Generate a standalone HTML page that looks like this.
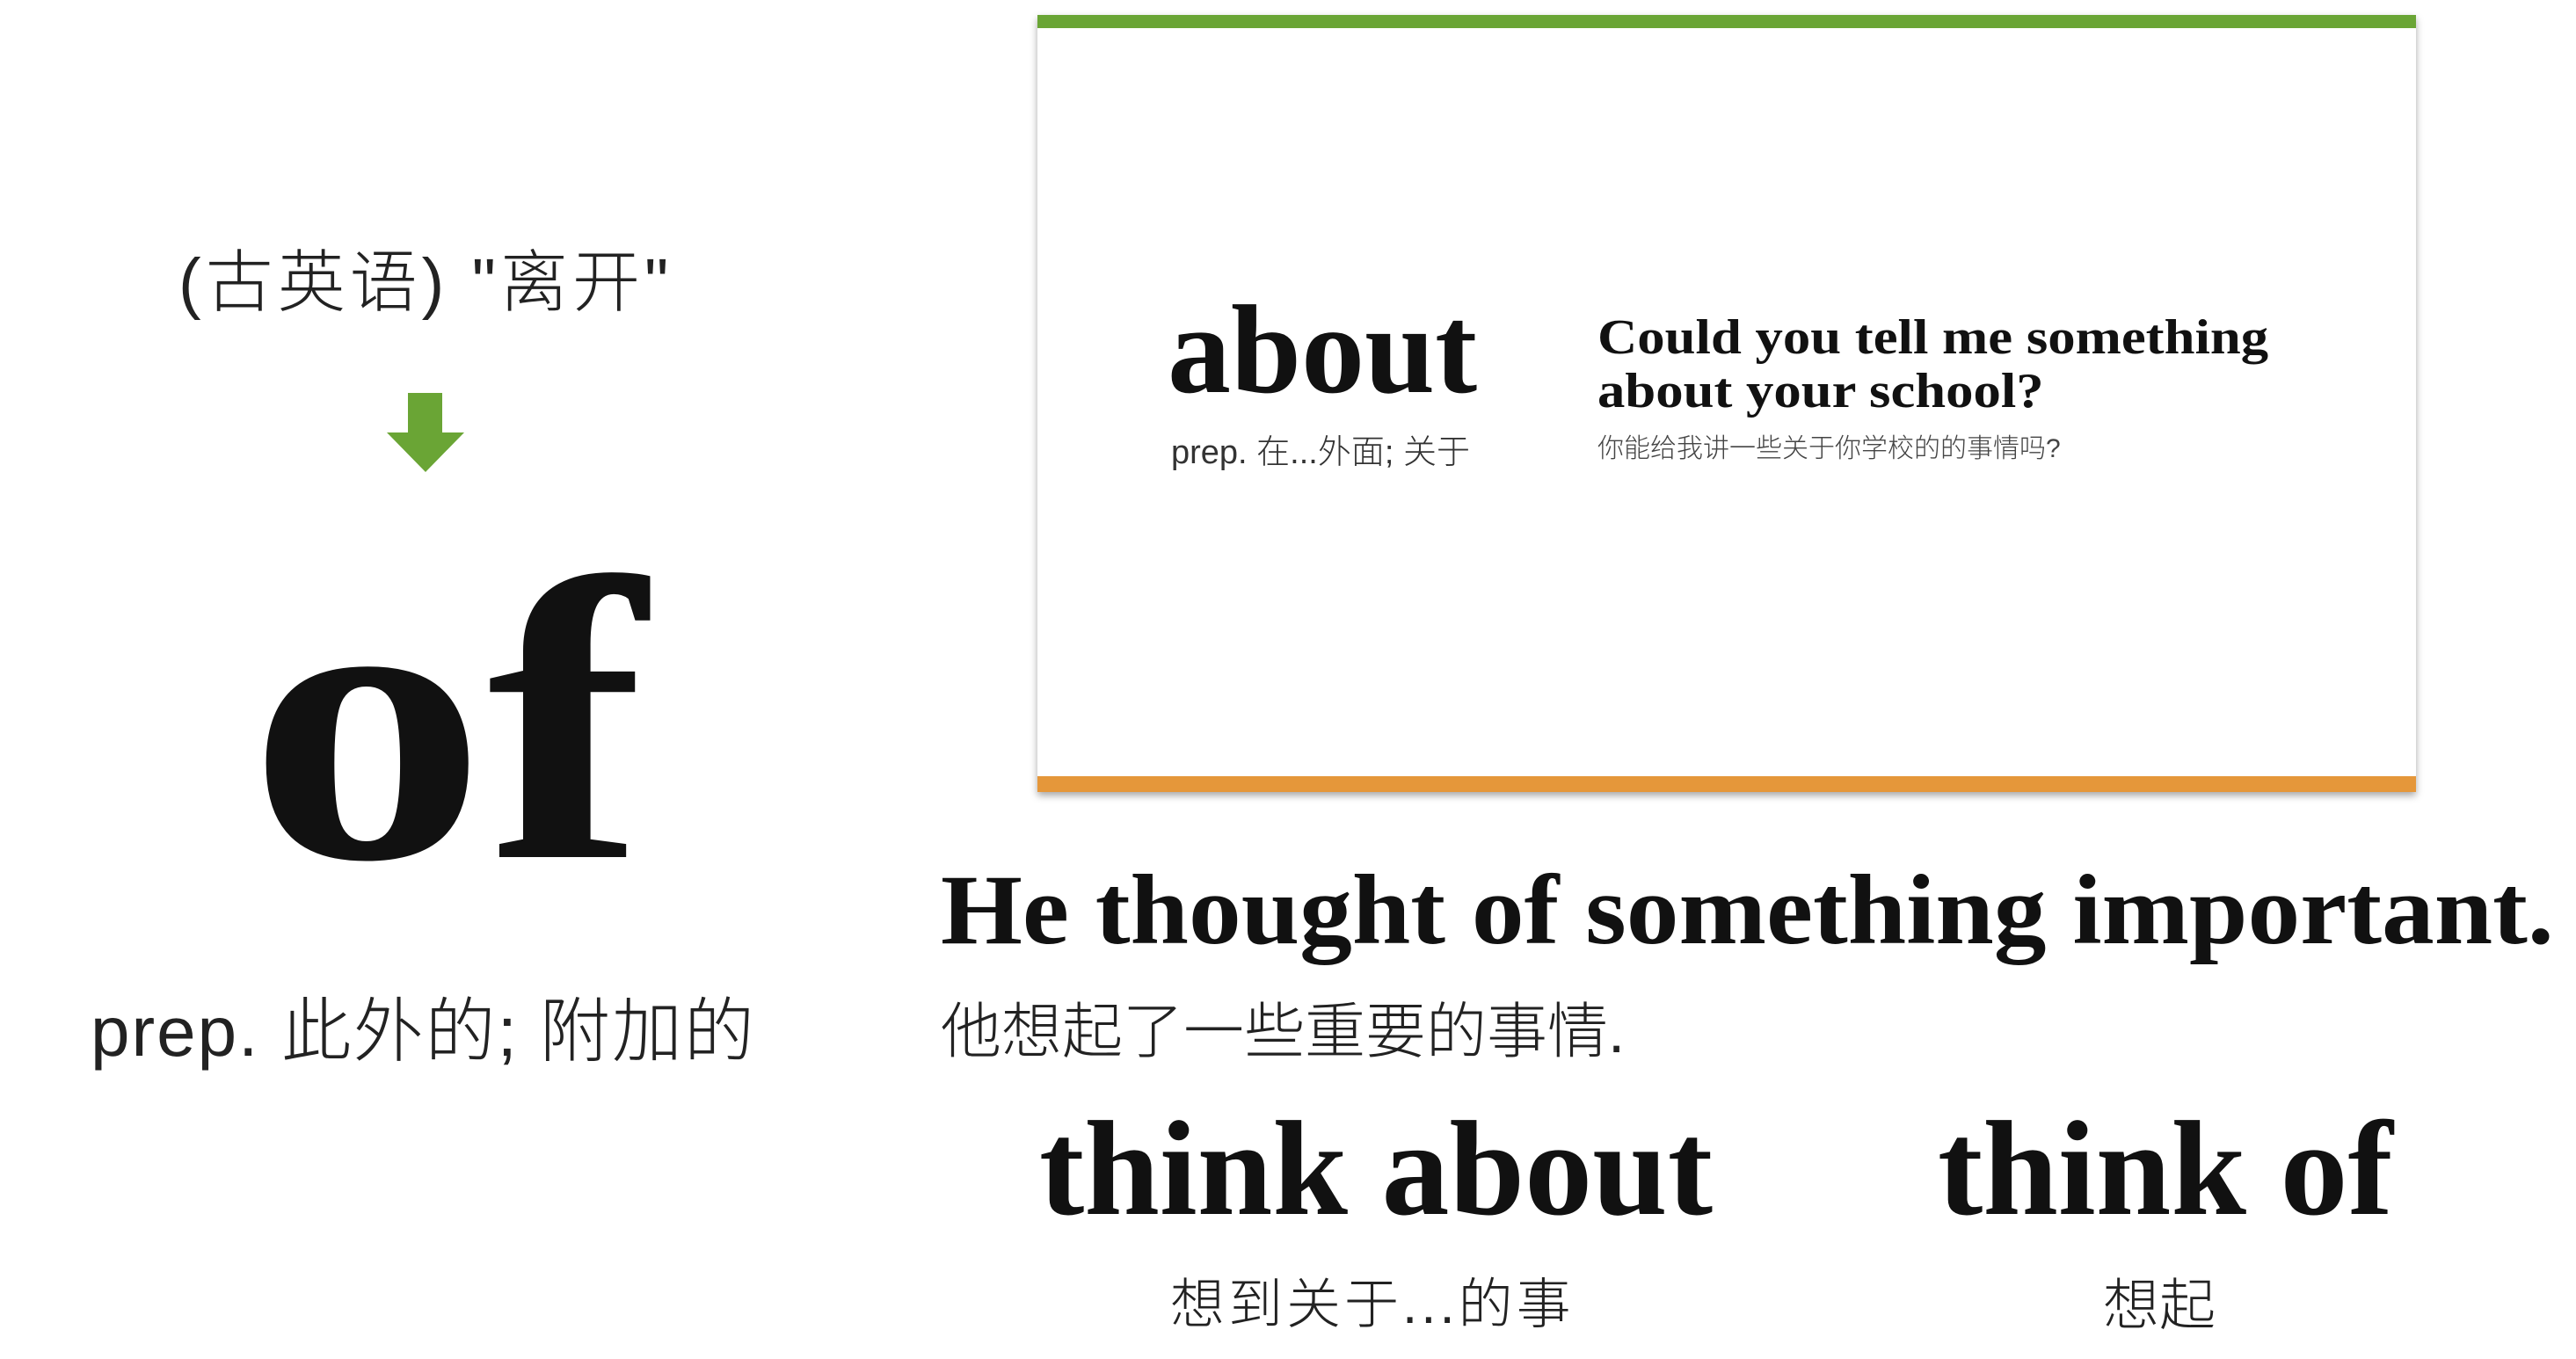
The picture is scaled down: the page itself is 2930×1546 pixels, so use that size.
<!DOCTYPE html>
<html><head><meta charset="utf-8"><style>
body{margin:0;width:2930px;height:1546px;background:#fff;position:relative;overflow:hidden}
div{position:absolute;white-space:nowrap;line-height:1}
.serif{font-family:"Liberation Serif","Noto Serif CJK SC",serif;font-weight:bold;color:#111}
.sans{font-family:"Liberation Sans","Noto Sans CJK SC",sans-serif;font-weight:300;color:#222}
</style></head><body>
<div class="sans" style="left:203px;top:284px;font-size:77px;letter-spacing:5px">(古英语) "离开"</div>
<svg style="position:absolute;left:440px;top:447px" width="90" height="92" viewBox="0 0 90 92"><polygon points="24,0 63,0 63,45 88,45 44,90 0,45 24,45" fill="#6aa535"/></svg>
<div class="serif" style="left:282px;top:590px;font-size:460px;transform:scaleX(1.18);transform-origin:left top">of</div>
<div class="sans" style="left:103px;top:1134px;font-size:80px;letter-spacing:2px">prep. 此外的; 附加的</div>

<div style="left:1180px;top:17px;width:1568px;height:884px;background:#fff;box-shadow:0 4px 8px rgba(0,0,0,.35)">
  <div style="left:0;top:0;width:1568px;height:15px;background:#6aa535"></div>
  <div style="left:0;top:866px;width:1568px;height:18px;background:#e5973a"></div>
  <div class="serif" style="left:148px;top:310px;font-size:144px;">about</div>
  <div class="sans" style="left:152px;top:479px;font-size:38px;color:#333">prep. 在...外面; 关于</div>
  <div class="serif" style="left:637px;top:339px;font-size:56px;transform:scaleX(1.12);transform-origin:left top">Could you tell me something</div>
  <div class="serif" style="left:637px;top:400px;font-size:56px;transform:scaleX(1.12);transform-origin:left top">about your school?</div>
  <div class="sans" style="left:637px;top:479px;font-size:30px;color:#444">你能给我讲一些关于你学校的的事情吗?</div>
</div>

<div class="serif" style="left:1070px;top:979px;font-size:113px;transform:scaleX(1.057);transform-origin:left top">He thought of something important.</div>
<div class="sans" style="left:1070px;top:1139px;font-size:69px;">他想起了一些重要的事情.</div>
<div class="serif" style="left:1182px;top:1253px;font-size:154px;">think about</div>
<div class="serif" style="left:2204px;top:1253px;font-size:154px;">think of</div>
<div class="sans" style="left:1331px;top:1454px;font-size:62px;letter-spacing:4px">想到关于...的事</div>
<div class="sans" style="left:2392px;top:1453px;font-size:64px;">想起</div>
</body></html>
